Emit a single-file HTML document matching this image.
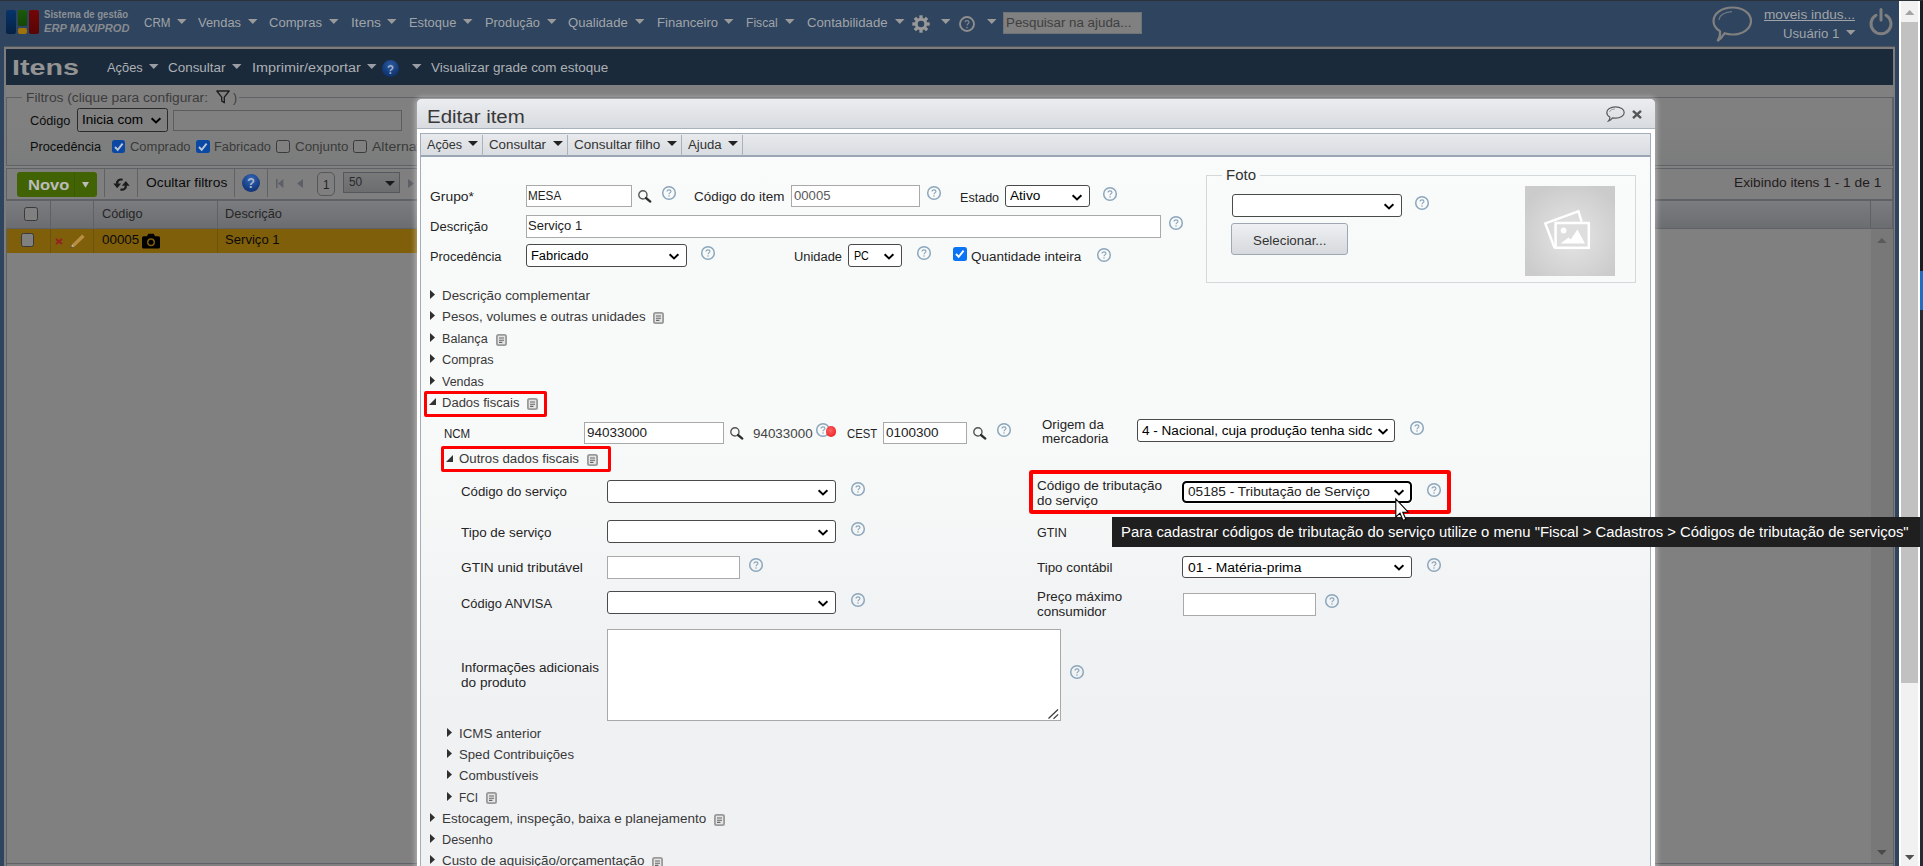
<!DOCTYPE html>
<html><head><meta charset="utf-8"><title>ERP MAXIPROD - Itens</title>
<style>
html,body{margin:0;padding:0;}
body{width:1923px;height:866px;overflow:hidden;position:relative;background:#808080;font-family:"Liberation Sans", sans-serif;}
div,span,svg{box-sizing:border-box;}
</style></head><body>
<div style="position:absolute;left:0px;top:0px;width:1923px;height:866px;box-sizing:border-box;background:#2f445e;"></div>
<div style="position:absolute;left:0px;top:0px;width:1899px;height:1px;box-sizing:border-box;background:#2b3138;"></div>
<div style="position:absolute;left:4px;top:47px;width:1891px;height:819px;box-sizing:border-box;background:#808080;border:2px solid #7d7d7d;border-bottom:none;"></div>
<div style="position:absolute;left:6px;top:49px;width:1887px;height:36px;box-sizing:border-box;background:#1a2a3b;"></div>
<div style="position:absolute;left:4px;top:46px;width:1891px;height:1px;box-sizing:border-box;background:#50555b;"></div>
<div style="position:absolute;left:6px;top:10px;width:10px;height:24.3px;box-sizing:border-box;background:linear-gradient(#07346a,#052244);border-radius:2px;"></div>
<div style="position:absolute;left:17.7px;top:10px;width:9.8px;height:15.7px;box-sizing:border-box;background:linear-gradient(#1b5b08,#134606);border-radius:2px;"></div>
<div style="position:absolute;left:17.7px;top:27.6px;width:9.8px;height:6.7px;box-sizing:border-box;background:#9e740a;border-radius:2px;"></div>
<div style="position:absolute;left:29px;top:10px;width:9.9px;height:24.3px;box-sizing:border-box;background:linear-gradient(#740606,#580404);border-radius:2px;"></div>
<svg style="position:absolute;left:176.5px;top:18.9px;overflow:visible" width="9.5" height="5" viewBox="0 0 9.5 5"><path d="M0 0 L9.5 0 L4.75 5 Z" fill="#9a9a9a"/></svg>
<svg style="position:absolute;left:247.6px;top:18.9px;overflow:visible" width="9.5" height="5" viewBox="0 0 9.5 5"><path d="M0 0 L9.5 0 L4.75 5 Z" fill="#9a9a9a"/></svg>
<svg style="position:absolute;left:329px;top:18.9px;overflow:visible" width="9.5" height="5" viewBox="0 0 9.5 5"><path d="M0 0 L9.5 0 L4.75 5 Z" fill="#9a9a9a"/></svg>
<svg style="position:absolute;left:387.4px;top:18.9px;overflow:visible" width="9.5" height="5" viewBox="0 0 9.5 5"><path d="M0 0 L9.5 0 L4.75 5 Z" fill="#9a9a9a"/></svg>
<svg style="position:absolute;left:463.4px;top:18.9px;overflow:visible" width="9.5" height="5" viewBox="0 0 9.5 5"><path d="M0 0 L9.5 0 L4.75 5 Z" fill="#9a9a9a"/></svg>
<svg style="position:absolute;left:547px;top:18.9px;overflow:visible" width="9.5" height="5" viewBox="0 0 9.5 5"><path d="M0 0 L9.5 0 L4.75 5 Z" fill="#9a9a9a"/></svg>
<svg style="position:absolute;left:635px;top:18.9px;overflow:visible" width="9.5" height="5" viewBox="0 0 9.5 5"><path d="M0 0 L9.5 0 L4.75 5 Z" fill="#9a9a9a"/></svg>
<svg style="position:absolute;left:724.4px;top:18.9px;overflow:visible" width="9.5" height="5" viewBox="0 0 9.5 5"><path d="M0 0 L9.5 0 L4.75 5 Z" fill="#9a9a9a"/></svg>
<svg style="position:absolute;left:785px;top:18.9px;overflow:visible" width="9.5" height="5" viewBox="0 0 9.5 5"><path d="M0 0 L9.5 0 L4.75 5 Z" fill="#9a9a9a"/></svg>
<svg style="position:absolute;left:895px;top:18.9px;overflow:visible" width="9.5" height="5" viewBox="0 0 9.5 5"><path d="M0 0 L9.5 0 L4.75 5 Z" fill="#9a9a9a"/></svg>
<svg style="position:absolute;left:941px;top:18.9px;overflow:visible" width="9.5" height="5" viewBox="0 0 9.5 5"><path d="M0 0 L9.5 0 L4.75 5 Z" fill="#9a9a9a"/></svg>
<svg style="position:absolute;left:987px;top:18.9px;overflow:visible" width="9.5" height="5" viewBox="0 0 9.5 5"><path d="M0 0 L9.5 0 L4.75 5 Z" fill="#9a9a9a"/></svg>
<svg style="position:absolute;left:912px;top:15px;overflow:visible" width="18" height="18" viewBox="0 0 18 18"><g transform="translate(9 9)" fill="none" stroke="#999"><circle r="4.75" stroke-width="2.9"/><path d="M0 -5.6 L0 -8.7" stroke-width="3.3" transform="rotate(0)"/><path d="M0 -5.6 L0 -8.7" stroke-width="3.3" transform="rotate(45)"/><path d="M0 -5.6 L0 -8.7" stroke-width="3.3" transform="rotate(90)"/><path d="M0 -5.6 L0 -8.7" stroke-width="3.3" transform="rotate(135)"/><path d="M0 -5.6 L0 -8.7" stroke-width="3.3" transform="rotate(180)"/><path d="M0 -5.6 L0 -8.7" stroke-width="3.3" transform="rotate(225)"/><path d="M0 -5.6 L0 -8.7" stroke-width="3.3" transform="rotate(270)"/><path d="M0 -5.6 L0 -8.7" stroke-width="3.3" transform="rotate(315)"/></g></svg>
<svg style="position:absolute;left:959px;top:16px;overflow:visible" width="16" height="16" viewBox="0 0 16 16"><circle cx="8" cy="8" r="7" fill="none" stroke="#8e8e8e" stroke-width="1.9"/><path d="M6 6.2 C6 4.2 10 4.2 10 6.2 C10 7.6 8 7.8 8 9.6" fill="none" stroke="#848a92" stroke-width="1.2"/><circle cx="8" cy="11.6" r="0.8" fill="#848a92"/></svg>
<div style="position:absolute;left:1003px;top:12px;width:139px;height:22px;box-sizing:border-box;background:#808080;border:1px solid #6e7378;"></div>
<svg style="position:absolute;left:1712px;top:6px;overflow:visible" width="41" height="37" viewBox="0 0 41 37"><path d="M20.5 1.5 C31 1.5 39 7.5 39 15 C39 22.5 31 28.5 20.5 28.5 C17.5 28.5 15 28.2 12.5 27.3 C10.5 30.5 8.5 33 5.5 35 C7.5 32 8.5 29 8 25.3 C4 22.8 1.5 19.2 1.5 15 C1.5 7.5 10 1.5 20.5 1.5 Z" fill="none" stroke="#808080" stroke-width="2.2"/><path d="M7 14 C7.5 9 13 6 20 5.7" fill="none" stroke="#6f7780" stroke-width="1.2"/></svg>
<svg style="position:absolute;left:1846px;top:29.8px;overflow:visible" width="9.5" height="5" viewBox="0 0 9.5 5"><path d="M0 0 L9.5 0 L4.75 5 Z" fill="#9a9a9a"/></svg>
<svg style="position:absolute;left:1868.5px;top:8px;overflow:visible" width="24" height="27" viewBox="0 0 24 27"><path d="M7 7.2 A10 10 0 1 0 17 7.2" fill="none" stroke="#7f7f7f" stroke-width="3" stroke-linecap="round"/><path d="M12 1.5 L12 12" stroke="#7f7f7f" stroke-width="3" stroke-linecap="round"/></svg>
<svg style="position:absolute;left:149px;top:64px;overflow:visible" width="9.5" height="5" viewBox="0 0 9.5 5"><path d="M0 0 L9.5 0 L4.75 5 Z" fill="#9a9ea4"/></svg>
<svg style="position:absolute;left:232px;top:64px;overflow:visible" width="9.5" height="5" viewBox="0 0 9.5 5"><path d="M0 0 L9.5 0 L4.75 5 Z" fill="#9a9ea4"/></svg>
<svg style="position:absolute;left:367.4px;top:64px;overflow:visible" width="9.5" height="5" viewBox="0 0 9.5 5"><path d="M0 0 L9.5 0 L4.75 5 Z" fill="#9a9ea4"/></svg>
<div style="position:absolute;left:382.4px;top:60px;width:16.6px;height:16.6px;box-sizing:border-box;border-radius:50%;background:radial-gradient(circle at 50% 30%,#2c5aa0,#123a78 60%,#0c2a5c);"></div>
<svg style="position:absolute;left:411.5px;top:64px;overflow:visible" width="9.5" height="5" viewBox="0 0 9.5 5"><path d="M0 0 L9.5 0 L4.75 5 Z" fill="#9a9ea4"/></svg>
<div style="position:absolute;left:6px;top:97px;width:1887px;height:68.5px;box-sizing:border-box;border:1px solid #5e6166;background:linear-gradient(#808080 30%,#7b7d7c);"></div>
<div style="position:absolute;left:22px;top:90px;width:217px;height:14px;box-sizing:border-box;background:#808080;"></div>
<svg style="position:absolute;left:216.3px;top:90px;overflow:visible" width="14" height="14" viewBox="0 0 14 14"><path d="M0.8 1 L13.2 1 L8.3 7.2 L8.3 12.8 L5.7 11 L5.7 7.2 Z" fill="none" stroke="#1c1c1c" stroke-width="1.3" stroke-linejoin="round"/></svg>
<div style="position:absolute;left:77px;top:108px;width:91px;height:24px;box-sizing:border-box;background:#808080;border:1px solid #2a2a2a;border-radius:2.5px;"></div>
<svg style="position:absolute;left:150.5px;top:118.0px;overflow:visible" width="10" height="5.2" viewBox="0 0 10 5.2"><path d="M0.6 0.3 L5.0 4.4 L9.4 0.3" fill="none" stroke="#000" stroke-width="2" stroke-linejoin="miter"/></svg>
<div style="position:absolute;left:173.2px;top:109.5px;width:228.6px;height:21px;box-sizing:border-box;background:#808080;border:1px solid #5d5d5d;"></div>
<div style="position:absolute;left:111.8px;top:139.7px;width:13.6px;height:13.6px;box-sizing:border-box;background:#0b48a4;border-radius:2.5px;"></div>
<svg style="position:absolute;left:111.8px;top:139.7px;overflow:visible" width="13.6" height="13.6" viewBox="0 0 13.6 13.6"><path d="M3 7 L5.7 9.8 L10.6 3.6" fill="none" stroke="#bcc6d6" stroke-width="1.9"/></svg>
<div style="position:absolute;left:196px;top:139.7px;width:13.6px;height:13.6px;box-sizing:border-box;background:#0b48a4;border-radius:2.5px;"></div>
<svg style="position:absolute;left:196px;top:139.7px;overflow:visible" width="13.6" height="13.6" viewBox="0 0 13.6 13.6"><path d="M3 7 L5.7 9.8 L10.6 3.6" fill="none" stroke="#bcc6d6" stroke-width="1.9"/></svg>
<div style="position:absolute;left:276.2px;top:139.7px;width:13.6px;height:13.6px;box-sizing:border-box;background:#808080;border:1px solid #3a3a3a;border-radius:2.5px;"></div>
<div style="position:absolute;left:353px;top:139.7px;width:13.6px;height:13.6px;box-sizing:border-box;background:#808080;border:1px solid #3a3a3a;border-radius:2.5px;"></div>
<div style="position:absolute;left:6px;top:168px;width:1887px;height:32px;box-sizing:border-box;border:1px solid #5e6166;background:#7f7f7f;"></div>
<div style="position:absolute;left:17px;top:172px;width:79.8px;height:25px;box-sizing:border-box;background:#426303;border-radius:3px;"></div>
<div style="position:absolute;left:74.3px;top:172.5px;width:1px;height:24px;box-sizing:border-box;background:#3b5903;"></div>
<svg style="position:absolute;left:82px;top:182px;overflow:visible" width="7" height="5.8" viewBox="0 0 7 5.8"><path d="M0 0 L7 0 L3.5 5.8 Z" fill="#bcbcbc"/></svg>
<div style="position:absolute;left:104px;top:169px;width:1px;height:28px;box-sizing:border-box;background:#5e6166;"></div>
<div style="position:absolute;left:137px;top:169px;width:1px;height:28px;box-sizing:border-box;background:#5e6166;"></div>
<div style="position:absolute;left:234px;top:169px;width:1px;height:28px;box-sizing:border-box;background:#5e6166;"></div>
<div style="position:absolute;left:267px;top:169px;width:1px;height:28px;box-sizing:border-box;background:#5e6166;"></div>
<svg style="position:absolute;left:112.5px;top:177.5px;overflow:visible" width="17" height="13" viewBox="0 0 17 13"><path d="M9.6 1.7 C6 0.9 3.6 3 4.3 6" fill="none" stroke="#1c1c1c" stroke-width="2.2"/><path d="M0.3 5.4 L8.1 5.4 L4.2 10.2 Z" fill="#1c1c1c"/><path d="M7.4 11.5 C11 12.3 13.4 10.2 12.7 7.2" fill="none" stroke="#1c1c1c" stroke-width="2.2"/><path d="M16.7 7.8 L8.9 7.8 L12.8 3 Z" fill="#1c1c1c"/></svg>
<div style="position:absolute;left:241.8px;top:173.8px;width:18.4px;height:18.4px;box-sizing:border-box;border-radius:50%;background:radial-gradient(circle at 50% 28%,#3566b4,#173f86 60%,#0e2b63);"></div>
<svg style="position:absolute;left:275.6px;top:179px;overflow:visible" width="8" height="9" viewBox="0 0 8 9"><path d="M0 0h1.6v9H0z M7.4 0 L7.4 9 L2 4.5 Z" fill="#5c6066"/></svg>
<svg style="position:absolute;left:296.5px;top:179px;overflow:visible" width="6" height="9" viewBox="0 0 6 9"><path d="M6 0 L6 9 L0 4.5 Z" fill="#5c6066"/></svg>
<div style="position:absolute;left:317px;top:172px;width:18px;height:24px;box-sizing:border-box;border:1px solid #54575c;border-radius:5px;"></div>
<div style="position:absolute;left:343px;top:172px;width:57px;height:21px;box-sizing:border-box;background:linear-gradient(#78797b,#6c6d6f);border:1px solid #54575c;"></div>
<svg style="position:absolute;left:384.8px;top:181px;overflow:visible" width="10" height="5" viewBox="0 0 10 5"><path d="M0 0 L10 0 L5.0 5 Z" fill="#1a1a1a"/></svg>
<svg style="position:absolute;left:407.5px;top:179px;overflow:visible" width="6" height="9" viewBox="0 0 6 9"><path d="M0 0 L0 9 L6 4.5 Z" fill="#5c6066"/></svg>
<div style="position:absolute;left:6px;top:199.5px;width:1887px;height:29.3px;box-sizing:border-box;background:linear-gradient(#7b7c7f,#6c6d70);border:1px solid #5e6166;border-left:none;"></div>
<div style="position:absolute;left:50.2px;top:200px;width:1px;height:28.3px;box-sizing:border-box;background:#5e6166;"></div>
<div style="position:absolute;left:93.2px;top:200px;width:1px;height:28.3px;box-sizing:border-box;background:#5e6166;"></div>
<div style="position:absolute;left:217.3px;top:200px;width:1px;height:28.3px;box-sizing:border-box;background:#5e6166;"></div>
<div style="position:absolute;left:1870.3px;top:200px;width:1px;height:28.3px;box-sizing:border-box;background:#5e6166;"></div>
<div style="position:absolute;left:24px;top:207.2px;width:13.6px;height:13.6px;box-sizing:border-box;background:#808080;border:1px solid #3a3a3a;border-radius:2.5px;"></div>
<div style="position:absolute;left:6.6px;top:228.8px;width:900px;height:24px;box-sizing:border-box;background:#805f0b;"></div>
<div style="position:absolute;left:50.2px;top:228.8px;width:1px;height:24px;box-sizing:border-box;background:#6b5314;"></div>
<div style="position:absolute;left:93.2px;top:228.8px;width:1px;height:24px;box-sizing:border-box;background:#6b5314;"></div>
<div style="position:absolute;left:217.3px;top:228.8px;width:1px;height:24px;box-sizing:border-box;background:#6b5314;"></div>
<div style="position:absolute;left:20.7px;top:233.2px;width:13.6px;height:13.6px;box-sizing:border-box;background:#808080;border:1px solid #3a3a3a;border-radius:2.5px;"></div>
<svg style="position:absolute;left:54.6px;top:238px;overflow:visible" width="8" height="7" viewBox="0 0 8 7"><path d="M1 1 L7 6 M7 1 L1 6" stroke="#952222" stroke-width="1.9"/></svg>
<svg style="position:absolute;left:70px;top:233.5px;overflow:visible" width="15" height="14" viewBox="0 0 15 14"><path d="M12.2 0.6 L14.6 3 L4.6 12.6 L2.2 10.2 Z" fill="#b98f45"/><path d="M2.2 10.2 L4.6 12.6 L0.8 13.6 Z" fill="#b9b2a4"/><path d="M0.4 13.8 L1.8 12.2 L2.4 13.2 Z" fill="#333"/></svg>
<svg style="position:absolute;left:142px;top:233px;overflow:visible" width="18" height="15.5" viewBox="0 0 18 15.5"><path d="M1.5 3.2 H5 L6.3 0.8 H11.7 L13 3.2 H16.5 Q18 3.2 18 4.7 V14 Q18 15.5 16.5 15.5 H1.5 Q0 15.5 0 14 V4.7 Q0 3.2 1.5 3.2 Z" fill="#000"/><circle cx="9" cy="9.2" r="4" fill="#805f0b"/><circle cx="9" cy="9.2" r="2.5" fill="#000"/></svg>
<div style="position:absolute;left:1870.8px;top:228.8px;width:22px;height:635px;box-sizing:border-box;background:#787878;"></div>
<svg style="position:absolute;left:1876.8px;top:849.5px;overflow:visible" width="9.7" height="5.1" viewBox="0 0 9.7 5.1"><path d="M0 0 L9.7 0 L4.85 5.1 Z" fill="#4a4a4a"/></svg>
<svg style="position:absolute;left:1876.8px;top:237.9px;overflow:visible" width="9.7" height="5.1" viewBox="0 0 9.7 5.1"><path d="M0 5.1 L9.7 5.1 L4.85 0 Z" fill="#5a5a5a"/></svg>
<div style="position:absolute;left:7px;top:863px;width:1886px;height:1px;box-sizing:border-box;background:#5e6166;"></div>
<div style="position:absolute;left:6px;top:228px;width:1px;height:638px;box-sizing:border-box;background:#5e6166;"></div>
<div style="position:absolute;left:1892.5px;top:97px;width:1px;height:769px;box-sizing:border-box;background:#5e6166;"></div>
<span style="position:absolute;left:44.4px;top:6px;line-height:17px;white-space:pre;font-size:10.2px;color:#8b9096;font-weight:bold;font-style:normal;letter-spacing:0.000px;transform:scaleX(0.9400);transform-origin:0 0;">Sistema de gestão</span>
<span style="position:absolute;left:43.9px;top:19px;line-height:18px;white-space:pre;font-size:11.6px;color:#868b91;font-weight:bold;font-style:italic;letter-spacing:0.000px;transform:scaleX(0.9593);transform-origin:0 0;">ERP MAXIPROD</span>
<span style="position:absolute;left:143.5px;top:13px;line-height:20px;white-space:pre;font-size:12.5px;color:#a0a4aa;font-weight:normal;font-style:normal;letter-spacing:0.000px;transform:scaleX(0.9308);transform-origin:0 0;">CRM</span>
<span style="position:absolute;left:198.0px;top:13px;line-height:20px;white-space:pre;font-size:12.5px;color:#a0a4aa;font-weight:normal;font-style:normal;letter-spacing:0.000px;transform:scaleX(1.0307);transform-origin:0 0;">Vendas</span>
<span style="position:absolute;left:269.0px;top:13px;line-height:20px;white-space:pre;font-size:12.5px;color:#a0a4aa;font-weight:normal;font-style:normal;letter-spacing:0.000px;transform:scaleX(1.0450);transform-origin:0 0;">Compras</span>
<span style="position:absolute;left:351.0px;top:13px;line-height:20px;white-space:pre;font-size:12.5px;color:#a0a4aa;font-weight:normal;font-style:normal;letter-spacing:-0.000px;transform:scaleX(1.1066);transform-origin:0 0;">Itens</span>
<span style="position:absolute;left:409.3px;top:13px;line-height:20px;white-space:pre;font-size:12.5px;color:#a0a4aa;font-weight:normal;font-style:normal;letter-spacing:-0.000px;transform:scaleX(1.0311);transform-origin:0 0;">Estoque</span>
<span style="position:absolute;left:485.0px;top:13px;line-height:20px;white-space:pre;font-size:12.5px;color:#a0a4aa;font-weight:normal;font-style:normal;letter-spacing:0.000px;transform:scaleX(1.0277);transform-origin:0 0;">Produção</span>
<span style="position:absolute;left:568.3px;top:13px;line-height:20px;white-space:pre;font-size:12.5px;color:#a0a4aa;font-weight:normal;font-style:normal;letter-spacing:0.000px;transform:scaleX(1.0474);transform-origin:0 0;">Qualidade</span>
<span style="position:absolute;left:656.8px;top:13px;line-height:20px;white-space:pre;font-size:12.5px;color:#a0a4aa;font-weight:normal;font-style:normal;letter-spacing:0.000px;transform:scaleX(1.0467);transform-origin:0 0;">Financeiro</span>
<span style="position:absolute;left:746.3px;top:13px;line-height:20px;white-space:pre;font-size:12.5px;color:#a0a4aa;font-weight:normal;font-style:normal;letter-spacing:0.000px;transform:scaleX(0.9707);transform-origin:0 0;">Fiscal</span>
<span style="position:absolute;left:807.4px;top:13px;line-height:20px;white-space:pre;font-size:12.5px;color:#a0a4aa;font-weight:normal;font-style:normal;letter-spacing:0.000px;transform:scaleX(1.0542);transform-origin:0 0;">Contabilidade</span>
<span style="position:absolute;left:1005.6px;top:13px;line-height:20px;white-space:pre;font-size:12.5px;color:#3f3f3f;font-weight:normal;font-style:normal;letter-spacing:0.000px;transform:scaleX(1.0677);transform-origin:0 0;">Pesquisar na ajuda...</span>
<span style="position:absolute;left:1764.0px;top:5px;line-height:20px;white-space:pre;font-size:12.5px;color:#a0a4aa;font-weight:normal;font-style:normal;letter-spacing:0.000px;transform:scaleX(1.0915);transform-origin:0 0;text-decoration:underline;">moveis indus...</span>
<span style="position:absolute;left:1782.7px;top:24px;line-height:20px;white-space:pre;font-size:12.5px;color:#a0a4aa;font-weight:normal;font-style:normal;letter-spacing:0.000px;transform:scaleX(1.0523);transform-origin:0 0;">Usuário 1</span>
<span style="position:absolute;left:12.0px;top:52px;line-height:31px;white-space:pre;font-size:22.6px;color:#939393;font-weight:bold;font-style:normal;letter-spacing:0.000px;transform:scaleX(1.2705);transform-origin:0 0;">Itens</span>
<span style="position:absolute;left:106.6px;top:58px;line-height:20px;white-space:pre;font-size:12.5px;color:#adb0b4;font-weight:normal;font-style:normal;letter-spacing:0.000px;transform:scaleX(1.0273);transform-origin:0 0;">Ações</span>
<span style="position:absolute;left:168.0px;top:58px;line-height:20px;white-space:pre;font-size:12.5px;color:#adb0b4;font-weight:normal;font-style:normal;letter-spacing:0.000px;transform:scaleX(1.0748);transform-origin:0 0;">Consultar</span>
<span style="position:absolute;left:251.6px;top:58px;line-height:20px;white-space:pre;font-size:12.5px;color:#adb0b4;font-weight:normal;font-style:normal;letter-spacing:0.009px;transform:scaleX(1.1500);transform-origin:0 0;">Imprimir/exportar</span>
<span style="position:absolute;left:387.2px;top:59px;line-height:21px;white-space:pre;font-size:13px;color:#9fb0c8;font-weight:bold;font-style:normal;letter-spacing:0.000px;transform:scaleX(0.8802);transform-origin:0 0;">?</span>
<span style="position:absolute;left:430.6px;top:58px;line-height:20px;white-space:pre;font-size:12.5px;color:#adb0b4;font-weight:normal;font-style:normal;letter-spacing:0.000px;transform:scaleX(1.0781);transform-origin:0 0;">Visualizar grade com estoque</span>
<span style="position:absolute;left:26.2px;top:88px;line-height:20px;white-space:pre;font-size:12.5px;color:#3c3c3c;font-weight:normal;font-style:normal;letter-spacing:0.000px;transform:scaleX(1.1005);transform-origin:0 0;">Filtros (clique para configurar: </span>
<span style="position:absolute;left:232.5px;top:88px;line-height:20px;white-space:pre;font-size:12.5px;color:#3c3c3c;font-weight:normal;font-style:normal;letter-spacing:0.000px;transform:scaleX(0.9828);transform-origin:0 0;">)</span>
<span style="position:absolute;left:30.0px;top:111px;line-height:20px;white-space:pre;font-size:12.5px;color:#0c0c0c;font-weight:normal;font-style:normal;letter-spacing:0.000px;transform:scaleX(1.0170);transform-origin:0 0;">Código</span>
<span style="position:absolute;left:82.0px;top:110px;line-height:20px;white-space:pre;font-size:12.5px;color:#000;font-weight:normal;font-style:normal;letter-spacing:0.000px;transform:scaleX(1.0838);transform-origin:0 0;">Inicia com</span>
<span style="position:absolute;left:30.0px;top:137px;line-height:20px;white-space:pre;font-size:12.5px;color:#0c0c0c;font-weight:normal;font-style:normal;letter-spacing:0.000px;transform:scaleX(1.0216);transform-origin:0 0;">Procedência</span>
<span style="position:absolute;left:130.4px;top:137px;line-height:20px;white-space:pre;font-size:12.5px;color:#3a3a3a;font-weight:normal;font-style:normal;letter-spacing:0.000px;transform:scaleX(1.0381);transform-origin:0 0;">Comprado</span>
<span style="position:absolute;left:214.4px;top:137px;line-height:20px;white-space:pre;font-size:12.5px;color:#3a3a3a;font-weight:normal;font-style:normal;letter-spacing:-0.000px;transform:scaleX(1.0253);transform-origin:0 0;">Fabricado</span>
<span style="position:absolute;left:294.8px;top:137px;line-height:20px;white-space:pre;font-size:12.5px;color:#3a3a3a;font-weight:normal;font-style:normal;letter-spacing:0.000px;transform:scaleX(1.0690);transform-origin:0 0;">Conjunto</span>
<span style="position:absolute;left:371.6px;top:137px;line-height:20px;white-space:pre;font-size:12.5px;color:#3a3a3a;font-weight:normal;font-style:normal;letter-spacing:0.000px;transform:scaleX(1.1242);transform-origin:0 0;">Alternativo</span>
<span style="position:absolute;left:28.0px;top:173px;line-height:23px;white-space:pre;font-size:15.4px;color:#bcbcbc;font-weight:bold;font-style:normal;letter-spacing:0.000px;transform:scaleX(1.0732);transform-origin:0 0;">Novo</span>
<span style="position:absolute;left:145.7px;top:173px;line-height:20px;white-space:pre;font-size:12.5px;color:#0a0a0a;font-weight:normal;font-style:normal;letter-spacing:0.000px;transform:scaleX(1.1040);transform-origin:0 0;">Ocultar filtros</span>
<span style="position:absolute;left:247.0px;top:172px;line-height:22px;white-space:pre;font-size:14.5px;color:#a6b5cc;font-weight:bold;font-style:normal;letter-spacing:0.000px;transform:scaleX(0.9030);transform-origin:0 0;">?</span>
<span style="position:absolute;left:322.5px;top:175px;line-height:20px;white-space:pre;font-size:12.5px;color:#222;font-weight:normal;font-style:normal;letter-spacing:0.000px;transform:scaleX(0.9348);transform-origin:0 0;">1</span>
<span style="position:absolute;left:348.8px;top:172px;line-height:20px;white-space:pre;font-size:12.5px;color:#2a2a2a;font-weight:normal;font-style:normal;letter-spacing:0.000px;transform:scaleX(0.9492);transform-origin:0 0;">50</span>
<span style="position:absolute;left:1734.0px;top:173px;line-height:20px;white-space:pre;font-size:12.5px;color:#241c1c;font-weight:normal;font-style:normal;letter-spacing:0.000px;transform:scaleX(1.0982);transform-origin:0 0;">Exibindo itens 1 - 1 de 1</span>
<span style="position:absolute;left:101.5px;top:204px;line-height:20px;white-space:pre;font-size:12.5px;color:#262626;font-weight:normal;font-style:normal;letter-spacing:0.000px;transform:scaleX(1.0221);transform-origin:0 0;">Código</span>
<span style="position:absolute;left:225.4px;top:204px;line-height:20px;white-space:pre;font-size:12.5px;color:#262626;font-weight:normal;font-style:normal;letter-spacing:-0.000px;transform:scaleX(1.0256);transform-origin:0 0;">Descrição</span>
<span style="position:absolute;left:101.5px;top:230px;line-height:20px;white-space:pre;font-size:12.5px;color:#0a0a0a;font-weight:normal;font-style:normal;letter-spacing:0.000px;transform:scaleX(1.0700);transform-origin:0 0;">00005</span>
<span style="position:absolute;left:225.4px;top:230px;line-height:20px;white-space:pre;font-size:12.5px;color:#0a0a0a;font-weight:normal;font-style:normal;letter-spacing:0.000px;transform:scaleX(1.0478);transform-origin:0 0;">Serviço 1</span>
<div style="position:absolute;left:417px;top:99px;width:1238px;height:787px;box-sizing:border-box;background:#fff;border-radius:5px 5px 0 0;box-shadow:0 0 5px 2px rgba(255,255,255,.36);"></div>
<div style="position:absolute;left:417px;top:99px;width:1238px;height:30px;box-sizing:border-box;background:linear-gradient(#ebedf0,#d8dbdf);border-radius:5px 5px 0 0;border-bottom:1px solid #a9b3be;"></div>
<div style="position:absolute;left:420px;top:133px;width:1231px;height:740px;box-sizing:border-box;background:linear-gradient(#fafbfb 0px,#f8faf9 120px,#f8f9f9 300px,#f6f7f7 370px,#f2f3f4 470px,#f0f1f3 570px);border:1px solid #a3aeba;border-bottom:none;"></div>
<div style="position:absolute;left:420px;top:133px;width:1231px;height:24px;box-sizing:border-box;background:linear-gradient(#e8eaed,#d9dce0);border:1px solid #a3aeba;border-bottom:2px solid #9aa6b3;"></div>
<svg style="position:absolute;left:1606px;top:106px;overflow:visible" width="19" height="15.5" viewBox="0 0 19 15.5"><path d="M9.5 0.8 C14.5 0.8 18.2 3.4 18.2 6.5 C18.2 9.6 14.5 12.2 9.5 12.2 C8.4 12.2 7.4 12.1 6.5 11.9 C5.6 13.2 4.3 14.3 2.6 14.9 C3.6 13.7 4 12.5 3.8 11.1 C2 10 0.8 8.4 0.8 6.5 C0.8 3.4 4.5 0.8 9.5 0.8 Z" fill="none" stroke="#5a5a5a" stroke-width="1.2"/><path d="M3.6 6 C4 4 6.5 3 9 3" fill="none" stroke="#8a8a8a" stroke-width="0.8"/></svg>
<svg style="position:absolute;left:1632px;top:110px;overflow:visible" width="10" height="9" viewBox="0 0 10 9"><path d="M1 0.8 L9 8.2 M9 0.8 L1 8.2" stroke="#555" stroke-width="2.4"/></svg>
<div style="position:absolute;left:482px;top:134.5px;width:1px;height:21px;box-sizing:border-box;background:#aab3bd;"></div>
<div style="position:absolute;left:567px;top:134.5px;width:1px;height:21px;box-sizing:border-box;background:#aab3bd;"></div>
<div style="position:absolute;left:681px;top:134.5px;width:1px;height:21px;box-sizing:border-box;background:#aab3bd;"></div>
<div style="position:absolute;left:742px;top:134.5px;width:1px;height:21px;box-sizing:border-box;background:#aab3bd;"></div>
<svg style="position:absolute;left:468px;top:140.5px;overflow:visible" width="10" height="5" viewBox="0 0 10 5"><path d="M0 0 L10 0 L5.0 5 Z" fill="#222"/></svg>
<svg style="position:absolute;left:553px;top:140.5px;overflow:visible" width="10" height="5" viewBox="0 0 10 5"><path d="M0 0 L10 0 L5.0 5 Z" fill="#222"/></svg>
<svg style="position:absolute;left:667px;top:140.5px;overflow:visible" width="10" height="5" viewBox="0 0 10 5"><path d="M0 0 L10 0 L5.0 5 Z" fill="#222"/></svg>
<svg style="position:absolute;left:728px;top:140.5px;overflow:visible" width="10" height="5" viewBox="0 0 10 5"><path d="M0 0 L10 0 L5.0 5 Z" fill="#222"/></svg>
<div style="position:absolute;left:526px;top:185px;width:106px;height:22px;box-sizing:border-box;background:#fff;border:1px solid #a9a9a9;"></div>
<svg style="position:absolute;left:638px;top:190px;overflow:visible" width="14" height="14" viewBox="0 0 14 14"><circle cx="4.9" cy="4.9" r="4.1" fill="none" stroke="#555" stroke-width="1.4"/><path d="M8 8 L12.3 11.6" stroke="#2e2e2e" stroke-width="2.3" stroke-linecap="round"/></svg>
<svg style="position:absolute;left:661px;top:185.3px;overflow:visible" width="16" height="16" viewBox="0 0 16 16"><circle cx="8" cy="8" r="6.3" fill="none" stroke="#8ba6bb" stroke-width="1.5"/><path d="M6 6.4 C6 4.4 10 4.4 10 6.4 C10 7.6 8 7.7 8 9.3" fill="none" stroke="#86a3b9" stroke-width="1.1"/><circle cx="8" cy="11.1" r="0.75" fill="#86a3b9"/></svg>
<div style="position:absolute;left:791px;top:185px;width:129px;height:22px;box-sizing:border-box;background:#fff;border:1px solid #a9a9a9;"></div>
<svg style="position:absolute;left:926px;top:185.3px;overflow:visible" width="16" height="16" viewBox="0 0 16 16"><circle cx="8" cy="8" r="6.3" fill="none" stroke="#8ba6bb" stroke-width="1.5"/><path d="M6 6.4 C6 4.4 10 4.4 10 6.4 C10 7.6 8 7.7 8 9.3" fill="none" stroke="#86a3b9" stroke-width="1.1"/><circle cx="8" cy="11.1" r="0.75" fill="#86a3b9"/></svg>
<div style="position:absolute;left:1005px;top:185px;width:85px;height:22px;box-sizing:border-box;background:#fff;border:1px solid #4a4a4a;border-radius:3px;"></div>
<svg style="position:absolute;left:1071.5px;top:194.5px;overflow:visible" width="10" height="5.2" viewBox="0 0 10 5.2"><path d="M0.6 0.3 L5.0 4.4 L9.4 0.3" fill="none" stroke="#000" stroke-width="2" stroke-linejoin="miter"/></svg>
<svg style="position:absolute;left:1102px;top:186px;overflow:visible" width="16" height="16" viewBox="0 0 16 16"><circle cx="8" cy="8" r="6.3" fill="none" stroke="#8ba6bb" stroke-width="1.5"/><path d="M6 6.4 C6 4.4 10 4.4 10 6.4 C10 7.6 8 7.7 8 9.3" fill="none" stroke="#86a3b9" stroke-width="1.1"/><circle cx="8" cy="11.1" r="0.75" fill="#86a3b9"/></svg>
<div style="position:absolute;left:526px;top:215px;width:635px;height:23px;box-sizing:border-box;background:#fff;border:1px solid #a9a9a9;"></div>
<svg style="position:absolute;left:1168px;top:215px;overflow:visible" width="16" height="16" viewBox="0 0 16 16"><circle cx="8" cy="8" r="6.3" fill="none" stroke="#8ba6bb" stroke-width="1.5"/><path d="M6 6.4 C6 4.4 10 4.4 10 6.4 C10 7.6 8 7.7 8 9.3" fill="none" stroke="#86a3b9" stroke-width="1.1"/><circle cx="8" cy="11.1" r="0.75" fill="#86a3b9"/></svg>
<div style="position:absolute;left:526px;top:244px;width:161px;height:23px;box-sizing:border-box;background:#fff;border:1px solid #4a4a4a;border-radius:3px;"></div>
<svg style="position:absolute;left:669.3px;top:253.85px;overflow:visible" width="10" height="5.2" viewBox="0 0 10 5.2"><path d="M0.6 0.3 L5.0 4.4 L9.4 0.3" fill="none" stroke="#000" stroke-width="2" stroke-linejoin="miter"/></svg>
<svg style="position:absolute;left:700px;top:245.3px;overflow:visible" width="16" height="16" viewBox="0 0 16 16"><circle cx="8" cy="8" r="6.3" fill="none" stroke="#8ba6bb" stroke-width="1.5"/><path d="M6 6.4 C6 4.4 10 4.4 10 6.4 C10 7.6 8 7.7 8 9.3" fill="none" stroke="#86a3b9" stroke-width="1.1"/><circle cx="8" cy="11.1" r="0.75" fill="#86a3b9"/></svg>
<div style="position:absolute;left:848px;top:244px;width:54px;height:23px;box-sizing:border-box;background:#fff;border:1px solid #4a4a4a;border-radius:3px;"></div>
<svg style="position:absolute;left:884.3px;top:253.79999999999998px;overflow:visible" width="10" height="5.2" viewBox="0 0 10 5.2"><path d="M0.6 0.3 L5.0 4.4 L9.4 0.3" fill="none" stroke="#000" stroke-width="2" stroke-linejoin="miter"/></svg>
<svg style="position:absolute;left:915.7px;top:245.4px;overflow:visible" width="16" height="16" viewBox="0 0 16 16"><circle cx="8" cy="8" r="6.3" fill="none" stroke="#8ba6bb" stroke-width="1.5"/><path d="M6 6.4 C6 4.4 10 4.4 10 6.4 C10 7.6 8 7.7 8 9.3" fill="none" stroke="#86a3b9" stroke-width="1.1"/><circle cx="8" cy="11.1" r="0.75" fill="#86a3b9"/></svg>
<div style="position:absolute;left:953px;top:247.3px;width:13.6px;height:13.6px;box-sizing:border-box;background:#0b74f4;border-radius:2.5px;"></div>
<svg style="position:absolute;left:953px;top:247.3px;overflow:visible" width="13.6" height="13.6" viewBox="0 0 13.6 13.6"><path d="M3 7 L5.7 9.8 L10.6 3.6" fill="none" stroke="#fff" stroke-width="1.9"/></svg>
<svg style="position:absolute;left:1096px;top:247px;overflow:visible" width="16" height="16" viewBox="0 0 16 16"><circle cx="8" cy="8" r="6.3" fill="none" stroke="#8ba6bb" stroke-width="1.5"/><path d="M6 6.4 C6 4.4 10 4.4 10 6.4 C10 7.6 8 7.7 8 9.3" fill="none" stroke="#86a3b9" stroke-width="1.1"/><circle cx="8" cy="11.1" r="0.75" fill="#86a3b9"/></svg>
<div style="position:absolute;left:1206px;top:174.5px;width:429.6px;height:108px;box-sizing:border-box;border:1px solid #d3d8db;"></div>
<div style="position:absolute;left:1222px;top:168px;width:38px;height:14px;box-sizing:border-box;background:#f9fafa;"></div>
<div style="position:absolute;left:1232px;top:194px;width:170px;height:23px;box-sizing:border-box;background:#fff;border:1px solid #4a4a4a;border-radius:3px;"></div>
<svg style="position:absolute;left:1383.5px;top:203.8px;overflow:visible" width="10" height="5.2" viewBox="0 0 10 5.2"><path d="M0.6 0.3 L5.0 4.4 L9.4 0.3" fill="none" stroke="#000" stroke-width="2" stroke-linejoin="miter"/></svg>
<svg style="position:absolute;left:1414px;top:195px;overflow:visible" width="16" height="16" viewBox="0 0 16 16"><circle cx="8" cy="8" r="6.3" fill="none" stroke="#8ba6bb" stroke-width="1.5"/><path d="M6 6.4 C6 4.4 10 4.4 10 6.4 C10 7.6 8 7.7 8 9.3" fill="none" stroke="#86a3b9" stroke-width="1.1"/><circle cx="8" cy="11.1" r="0.75" fill="#86a3b9"/></svg>
<div style="position:absolute;left:1231px;top:223px;width:117px;height:32px;box-sizing:border-box;background:linear-gradient(#eef0f2,#d6d9dd);border:1px solid #9fa8b2;border-radius:3px;"></div>
<div style="position:absolute;left:1525px;top:186px;width:90px;height:90px;box-sizing:border-box;background:radial-gradient(circle at 52% 55%,#e6e6e6 0,#dadada 35%,#cbcbcb 80%);"></div>
<svg style="position:absolute;left:430px;top:290.3px;overflow:visible" width="5" height="9" viewBox="0 0 5 9"><path d="M0 0 L5 4.5 L0 9 Z" fill="#2f2f2f"/></svg>
<svg style="position:absolute;left:430px;top:311.1px;overflow:visible" width="5" height="9" viewBox="0 0 5 9"><path d="M0 0 L5 4.5 L0 9 Z" fill="#2f2f2f"/></svg>
<svg style="position:absolute;left:653.3px;top:312.40000000000003px;overflow:visible" width="11" height="12" viewBox="0 0 11 12"><rect x="0.9" y="0.9" width="9.2" height="10.2" rx="1.6" fill="#e4e4e4" stroke="#9a9a9a" stroke-width="1.8"/><path d="M3 4h5M3 6.2h5M3 8.4h3.4" stroke="#666" stroke-width="1.1"/></svg>
<svg style="position:absolute;left:430px;top:333.3px;overflow:visible" width="5" height="9" viewBox="0 0 5 9"><path d="M0 0 L5 4.5 L0 9 Z" fill="#2f2f2f"/></svg>
<svg style="position:absolute;left:496px;top:333.6px;overflow:visible" width="11" height="12" viewBox="0 0 11 12"><rect x="0.9" y="0.9" width="9.2" height="10.2" rx="1.6" fill="#e4e4e4" stroke="#9a9a9a" stroke-width="1.8"/><path d="M3 4h5M3 6.2h5M3 8.4h3.4" stroke="#666" stroke-width="1.1"/></svg>
<svg style="position:absolute;left:430px;top:354.1px;overflow:visible" width="5" height="9" viewBox="0 0 5 9"><path d="M0 0 L5 4.5 L0 9 Z" fill="#2f2f2f"/></svg>
<svg style="position:absolute;left:430px;top:376.1px;overflow:visible" width="5" height="9" viewBox="0 0 5 9"><path d="M0 0 L5 4.5 L0 9 Z" fill="#2f2f2f"/></svg>
<svg style="position:absolute;left:428.8px;top:398.2px;overflow:visible" width="7" height="7" viewBox="0 0 7 7"><path d="M7 0 L7 7 L0 7 Z" fill="#333"/></svg>
<svg style="position:absolute;left:527px;top:398.2px;overflow:visible" width="11" height="12" viewBox="0 0 11 12"><rect x="0.9" y="0.9" width="9.2" height="10.2" rx="1.6" fill="#e4e4e4" stroke="#9a9a9a" stroke-width="1.8"/><path d="M3 4h5M3 6.2h5M3 8.4h3.4" stroke="#666" stroke-width="1.1"/></svg>
<div style="position:absolute;left:584px;top:422px;width:140px;height:22px;box-sizing:border-box;background:#fff;border:1px solid #a9a9a9;"></div>
<svg style="position:absolute;left:730px;top:426.6px;overflow:visible" width="14" height="14" viewBox="0 0 14 14"><circle cx="4.9" cy="4.9" r="4.1" fill="none" stroke="#555" stroke-width="1.4"/><path d="M8 8 L12.3 11.6" stroke="#2e2e2e" stroke-width="2.3" stroke-linecap="round"/></svg>
<svg style="position:absolute;left:814.6px;top:421.8px;overflow:visible" width="16" height="16" viewBox="0 0 16 16"><circle cx="8" cy="8" r="6.3" fill="none" stroke="#8ba6bb" stroke-width="1.5"/><path d="M6 6.4 C6 4.4 10 4.4 10 6.4 C10 7.6 8 7.7 8 9.3" fill="none" stroke="#86a3b9" stroke-width="1.1"/><circle cx="8" cy="11.1" r="0.75" fill="#86a3b9"/></svg>
<div style="position:absolute;left:883px;top:422px;width:84px;height:22px;box-sizing:border-box;background:#fff;border:1px solid #a9a9a9;"></div>
<svg style="position:absolute;left:973px;top:426.6px;overflow:visible" width="14" height="14" viewBox="0 0 14 14"><circle cx="4.9" cy="4.9" r="4.1" fill="none" stroke="#555" stroke-width="1.4"/><path d="M8 8 L12.3 11.6" stroke="#2e2e2e" stroke-width="2.3" stroke-linecap="round"/></svg>
<svg style="position:absolute;left:995.8px;top:422px;overflow:visible" width="16" height="16" viewBox="0 0 16 16"><circle cx="8" cy="8" r="6.3" fill="none" stroke="#8ba6bb" stroke-width="1.5"/><path d="M6 6.4 C6 4.4 10 4.4 10 6.4 C10 7.6 8 7.7 8 9.3" fill="none" stroke="#86a3b9" stroke-width="1.1"/><circle cx="8" cy="11.1" r="0.75" fill="#86a3b9"/></svg>
<div style="position:absolute;left:1137px;top:419px;width:258px;height:23px;box-sizing:border-box;background:#fff;border:1px solid #4a4a4a;border-radius:3px;"></div>
<svg style="position:absolute;left:1377.5px;top:428.8px;overflow:visible" width="10" height="5.2" viewBox="0 0 10 5.2"><path d="M0.6 0.3 L5.0 4.4 L9.4 0.3" fill="none" stroke="#000" stroke-width="2" stroke-linejoin="miter"/></svg>
<svg style="position:absolute;left:1408.8px;top:420.3px;overflow:visible" width="16" height="16" viewBox="0 0 16 16"><circle cx="8" cy="8" r="6.3" fill="none" stroke="#8ba6bb" stroke-width="1.5"/><path d="M6 6.4 C6 4.4 10 4.4 10 6.4 C10 7.6 8 7.7 8 9.3" fill="none" stroke="#86a3b9" stroke-width="1.1"/><circle cx="8" cy="11.1" r="0.75" fill="#86a3b9"/></svg>
<svg style="position:absolute;left:445.6px;top:454.6px;overflow:visible" width="7" height="7" viewBox="0 0 7 7"><path d="M7 0 L7 7 L0 7 Z" fill="#333"/></svg>
<svg style="position:absolute;left:587.3px;top:454.4px;overflow:visible" width="11" height="12" viewBox="0 0 11 12"><rect x="0.9" y="0.9" width="9.2" height="10.2" rx="1.6" fill="#e4e4e4" stroke="#9a9a9a" stroke-width="1.8"/><path d="M3 4h5M3 6.2h5M3 8.4h3.4" stroke="#666" stroke-width="1.1"/></svg>
<div style="position:absolute;left:607px;top:480px;width:229px;height:23px;box-sizing:border-box;background:#fff;border:1px solid #4a4a4a;border-radius:3px;"></div>
<svg style="position:absolute;left:818.0px;top:489.95000000000005px;overflow:visible" width="10" height="5.2" viewBox="0 0 10 5.2"><path d="M0.6 0.3 L5.0 4.4 L9.4 0.3" fill="none" stroke="#000" stroke-width="2" stroke-linejoin="miter"/></svg>
<svg style="position:absolute;left:850px;top:481px;overflow:visible" width="16" height="16" viewBox="0 0 16 16"><circle cx="8" cy="8" r="6.3" fill="none" stroke="#8ba6bb" stroke-width="1.5"/><path d="M6 6.4 C6 4.4 10 4.4 10 6.4 C10 7.6 8 7.7 8 9.3" fill="none" stroke="#86a3b9" stroke-width="1.1"/><circle cx="8" cy="11.1" r="0.75" fill="#86a3b9"/></svg>
<div style="position:absolute;left:607px;top:520px;width:229px;height:23px;box-sizing:border-box;background:#fff;border:1px solid #4a4a4a;border-radius:3px;"></div>
<svg style="position:absolute;left:818.0px;top:529.85px;overflow:visible" width="10" height="5.2" viewBox="0 0 10 5.2"><path d="M0.6 0.3 L5.0 4.4 L9.4 0.3" fill="none" stroke="#000" stroke-width="2" stroke-linejoin="miter"/></svg>
<svg style="position:absolute;left:850px;top:521px;overflow:visible" width="16" height="16" viewBox="0 0 16 16"><circle cx="8" cy="8" r="6.3" fill="none" stroke="#8ba6bb" stroke-width="1.5"/><path d="M6 6.4 C6 4.4 10 4.4 10 6.4 C10 7.6 8 7.7 8 9.3" fill="none" stroke="#86a3b9" stroke-width="1.1"/><circle cx="8" cy="11.1" r="0.75" fill="#86a3b9"/></svg>
<div style="position:absolute;left:607px;top:556px;width:133px;height:23px;box-sizing:border-box;background:#fff;border:1px solid #a9a9a9;"></div>
<svg style="position:absolute;left:748px;top:557px;overflow:visible" width="16" height="16" viewBox="0 0 16 16"><circle cx="8" cy="8" r="6.3" fill="none" stroke="#8ba6bb" stroke-width="1.5"/><path d="M6 6.4 C6 4.4 10 4.4 10 6.4 C10 7.6 8 7.7 8 9.3" fill="none" stroke="#86a3b9" stroke-width="1.1"/><circle cx="8" cy="11.1" r="0.75" fill="#86a3b9"/></svg>
<div style="position:absolute;left:607px;top:591px;width:229px;height:23px;box-sizing:border-box;background:#fff;border:1px solid #4a4a4a;border-radius:3px;"></div>
<svg style="position:absolute;left:818.0px;top:600.9px;overflow:visible" width="10" height="5.2" viewBox="0 0 10 5.2"><path d="M0.6 0.3 L5.0 4.4 L9.4 0.3" fill="none" stroke="#000" stroke-width="2" stroke-linejoin="miter"/></svg>
<svg style="position:absolute;left:850px;top:592px;overflow:visible" width="16" height="16" viewBox="0 0 16 16"><circle cx="8" cy="8" r="6.3" fill="none" stroke="#8ba6bb" stroke-width="1.5"/><path d="M6 6.4 C6 4.4 10 4.4 10 6.4 C10 7.6 8 7.7 8 9.3" fill="none" stroke="#86a3b9" stroke-width="1.1"/><circle cx="8" cy="11.1" r="0.75" fill="#86a3b9"/></svg>
<div style="position:absolute;left:607px;top:629px;width:454px;height:92px;box-sizing:border-box;background:#fff;border:1px solid #a9a9a9;"></div>
<svg style="position:absolute;left:1068.9px;top:664px;overflow:visible" width="16" height="16" viewBox="0 0 16 16"><circle cx="8" cy="8" r="6.3" fill="none" stroke="#8ba6bb" stroke-width="1.5"/><path d="M6 6.4 C6 4.4 10 4.4 10 6.4 C10 7.6 8 7.7 8 9.3" fill="none" stroke="#86a3b9" stroke-width="1.1"/><circle cx="8" cy="11.1" r="0.75" fill="#86a3b9"/></svg>
<div style="position:absolute;left:1181.8px;top:480px;width:230.8px;height:23.8px;box-sizing:border-box;background:#fff;border-radius:5px;"></div>
<div style="position:absolute;left:1182px;top:481px;width:230px;height:22px;box-sizing:border-box;background:#fff;border:2px solid #000;border-radius:4.5px;"></div>
<svg style="position:absolute;left:1394.4px;top:490.4px;overflow:visible" width="10" height="5.2" viewBox="0 0 10 5.2"><path d="M0.6 0.3 L5.0 4.4 L9.4 0.3" fill="none" stroke="#000" stroke-width="2" stroke-linejoin="miter"/></svg>
<svg style="position:absolute;left:1426px;top:482px;overflow:visible" width="16" height="16" viewBox="0 0 16 16"><circle cx="8" cy="8" r="6.3" fill="none" stroke="#8ba6bb" stroke-width="1.5"/><path d="M6 6.4 C6 4.4 10 4.4 10 6.4 C10 7.6 8 7.7 8 9.3" fill="none" stroke="#86a3b9" stroke-width="1.1"/><circle cx="8" cy="11.1" r="0.75" fill="#86a3b9"/></svg>
<div style="position:absolute;left:1182px;top:556px;width:230px;height:22px;box-sizing:border-box;background:#fff;border:1px solid #4a4a4a;border-radius:3px;"></div>
<svg style="position:absolute;left:1394.4px;top:565.4000000000001px;overflow:visible" width="10" height="5.2" viewBox="0 0 10 5.2"><path d="M0.6 0.3 L5.0 4.4 L9.4 0.3" fill="none" stroke="#000" stroke-width="2" stroke-linejoin="miter"/></svg>
<svg style="position:absolute;left:1426px;top:557px;overflow:visible" width="16" height="16" viewBox="0 0 16 16"><circle cx="8" cy="8" r="6.3" fill="none" stroke="#8ba6bb" stroke-width="1.5"/><path d="M6 6.4 C6 4.4 10 4.4 10 6.4 C10 7.6 8 7.7 8 9.3" fill="none" stroke="#86a3b9" stroke-width="1.1"/><circle cx="8" cy="11.1" r="0.75" fill="#86a3b9"/></svg>
<div style="position:absolute;left:1183px;top:593px;width:133px;height:23px;box-sizing:border-box;background:#fff;border:1px solid #a9a9a9;"></div>
<svg style="position:absolute;left:1324px;top:592.7px;overflow:visible" width="16" height="16" viewBox="0 0 16 16"><circle cx="8" cy="8" r="6.3" fill="none" stroke="#8ba6bb" stroke-width="1.5"/><path d="M6 6.4 C6 4.4 10 4.4 10 6.4 C10 7.6 8 7.7 8 9.3" fill="none" stroke="#86a3b9" stroke-width="1.1"/><circle cx="8" cy="11.1" r="0.75" fill="#86a3b9"/></svg>
<svg style="position:absolute;left:447px;top:728.0px;overflow:visible" width="5" height="9" viewBox="0 0 5 9"><path d="M0 0 L5 4.5 L0 9 Z" fill="#2f2f2f"/></svg>
<svg style="position:absolute;left:447px;top:749.1999999999999px;overflow:visible" width="5" height="9" viewBox="0 0 5 9"><path d="M0 0 L5 4.5 L0 9 Z" fill="#2f2f2f"/></svg>
<svg style="position:absolute;left:447px;top:770.0px;overflow:visible" width="5" height="9" viewBox="0 0 5 9"><path d="M0 0 L5 4.5 L0 9 Z" fill="#2f2f2f"/></svg>
<svg style="position:absolute;left:447px;top:792.3px;overflow:visible" width="5" height="9" viewBox="0 0 5 9"><path d="M0 0 L5 4.5 L0 9 Z" fill="#2f2f2f"/></svg>
<svg style="position:absolute;left:486px;top:792.1px;overflow:visible" width="11" height="12" viewBox="0 0 11 12"><rect x="0.9" y="0.9" width="9.2" height="10.2" rx="1.6" fill="#e4e4e4" stroke="#9a9a9a" stroke-width="1.8"/><path d="M3 4h5M3 6.2h5M3 8.4h3.4" stroke="#666" stroke-width="1.1"/></svg>
<svg style="position:absolute;left:430px;top:813.0999999999999px;overflow:visible" width="5" height="9" viewBox="0 0 5 9"><path d="M0 0 L5 4.5 L0 9 Z" fill="#2f2f2f"/></svg>
<svg style="position:absolute;left:714px;top:814.4px;overflow:visible" width="11" height="12" viewBox="0 0 11 12"><rect x="0.9" y="0.9" width="9.2" height="10.2" rx="1.6" fill="#e4e4e4" stroke="#9a9a9a" stroke-width="1.8"/><path d="M3 4h5M3 6.2h5M3 8.4h3.4" stroke="#666" stroke-width="1.1"/></svg>
<svg style="position:absolute;left:430px;top:834.0px;overflow:visible" width="5" height="9" viewBox="0 0 5 9"><path d="M0 0 L5 4.5 L0 9 Z" fill="#2f2f2f"/></svg>
<svg style="position:absolute;left:430px;top:855.3px;overflow:visible" width="5" height="9" viewBox="0 0 5 9"><path d="M0 0 L5 4.5 L0 9 Z" fill="#2f2f2f"/></svg>
<svg style="position:absolute;left:652.4px;top:856.6px;overflow:visible" width="11" height="12" viewBox="0 0 11 12"><rect x="0.9" y="0.9" width="9.2" height="10.2" rx="1.6" fill="#e4e4e4" stroke="#9a9a9a" stroke-width="1.8"/><path d="M3 4h5M3 6.2h5M3 8.4h3.4" stroke="#666" stroke-width="1.1"/></svg>
<span style="position:absolute;left:426.6px;top:103px;line-height:27px;white-space:pre;font-size:18.3px;color:#383838;font-weight:normal;font-style:normal;letter-spacing:0.000px;transform:scaleX(1.1193);transform-origin:0 0;">Editar item</span>
<span style="position:absolute;left:427.0px;top:135px;line-height:20px;white-space:pre;font-size:12.5px;color:#333;font-weight:normal;font-style:normal;letter-spacing:0.000px;transform:scaleX(1.0072);transform-origin:0 0;">Ações</span>
<span style="position:absolute;left:489.0px;top:135px;line-height:20px;white-space:pre;font-size:12.5px;color:#333;font-weight:normal;font-style:normal;letter-spacing:0.000px;transform:scaleX(1.0654);transform-origin:0 0;">Consultar</span>
<span style="position:absolute;left:573.7px;top:135px;line-height:20px;white-space:pre;font-size:12.5px;color:#333;font-weight:normal;font-style:normal;letter-spacing:0.000px;transform:scaleX(1.0800);transform-origin:0 0;">Consultar filho</span>
<span style="position:absolute;left:687.7px;top:135px;line-height:20px;white-space:pre;font-size:12.5px;color:#333;font-weight:normal;font-style:normal;letter-spacing:0.000px;transform:scaleX(1.0536);transform-origin:0 0;">Ajuda</span>
<span style="position:absolute;left:430.0px;top:187px;line-height:20px;white-space:pre;font-size:12.5px;color:#242424;font-weight:normal;font-style:normal;letter-spacing:0.000px;transform:scaleX(1.1108);transform-origin:0 0;">Grupo*</span>
<span style="position:absolute;left:694.0px;top:187px;line-height:20px;white-space:pre;font-size:12.5px;color:#242424;font-weight:normal;font-style:normal;letter-spacing:0.000px;transform:scaleX(1.0752);transform-origin:0 0;">Código do item</span>
<span style="position:absolute;left:959.5px;top:188px;line-height:20px;white-space:pre;font-size:12.5px;color:#242424;font-weight:normal;font-style:normal;letter-spacing:0.000px;transform:scaleX(1.0046);transform-origin:0 0;">Estado</span>
<span style="position:absolute;left:430.0px;top:217px;line-height:20px;white-space:pre;font-size:12.5px;color:#242424;font-weight:normal;font-style:normal;letter-spacing:0.000px;transform:scaleX(1.0436);transform-origin:0 0;">Descrição</span>
<span style="position:absolute;left:430.0px;top:247px;line-height:20px;white-space:pre;font-size:12.5px;color:#242424;font-weight:normal;font-style:normal;letter-spacing:0.000px;transform:scaleX(1.0288);transform-origin:0 0;">Procedência</span>
<span style="position:absolute;left:794.0px;top:247px;line-height:20px;white-space:pre;font-size:12.5px;color:#242424;font-weight:normal;font-style:normal;letter-spacing:0.000px;transform:scaleX(1.0305);transform-origin:0 0;">Unidade</span>
<span style="position:absolute;left:971.4px;top:247px;line-height:20px;white-space:pre;font-size:12.5px;color:#242424;font-weight:normal;font-style:normal;letter-spacing:0.000px;transform:scaleX(1.0787);transform-origin:0 0;">Quantidade inteira</span>
<span style="position:absolute;left:442.3px;top:286px;line-height:20px;white-space:pre;font-size:12.5px;color:#383838;font-weight:normal;font-style:normal;letter-spacing:0.000px;transform:scaleX(1.0698);transform-origin:0 0;">Descrição complementar</span>
<span style="position:absolute;left:442.3px;top:307px;line-height:20px;white-space:pre;font-size:12.5px;color:#383838;font-weight:normal;font-style:normal;letter-spacing:0.000px;transform:scaleX(1.0660);transform-origin:0 0;">Pesos, volumes e outras unidades</span>
<span style="position:absolute;left:442.3px;top:329px;line-height:20px;white-space:pre;font-size:12.5px;color:#383838;font-weight:normal;font-style:normal;letter-spacing:0.000px;transform:scaleX(1.0113);transform-origin:0 0;">Balança</span>
<span style="position:absolute;left:442.3px;top:350px;line-height:20px;white-space:pre;font-size:12.5px;color:#383838;font-weight:normal;font-style:normal;letter-spacing:0.000px;transform:scaleX(1.0193);transform-origin:0 0;">Compras</span>
<span style="position:absolute;left:442.3px;top:372px;line-height:20px;white-space:pre;font-size:12.5px;color:#383838;font-weight:normal;font-style:normal;letter-spacing:0.000px;transform:scaleX(0.9996);transform-origin:0 0;">Vendas</span>
<span style="position:absolute;left:442.3px;top:393px;line-height:20px;white-space:pre;font-size:12.5px;color:#383838;font-weight:normal;font-style:normal;letter-spacing:0.000px;transform:scaleX(1.0411);transform-origin:0 0;">Dados fiscais</span>
<span style="position:absolute;left:444.3px;top:424px;line-height:20px;white-space:pre;font-size:12.5px;color:#242424;font-weight:normal;font-style:normal;letter-spacing:0.000px;transform:scaleX(0.9203);transform-origin:0 0;">NCM</span>
<span style="position:absolute;left:753.4px;top:424px;line-height:20px;white-space:pre;font-size:12.5px;color:#444;font-weight:normal;font-style:normal;letter-spacing:0.000px;transform:scaleX(1.0715);transform-origin:0 0;">94033000</span>
<span style="position:absolute;left:846.5px;top:424px;line-height:20px;white-space:pre;font-size:12.5px;color:#242424;font-weight:normal;font-style:normal;letter-spacing:0.000px;transform:scaleX(0.9057);transform-origin:0 0;">CEST</span>
<span style="position:absolute;left:1041.6px;top:415px;line-height:20px;white-space:pre;font-size:12.5px;color:#242424;font-weight:normal;font-style:normal;letter-spacing:0.000px;transform:scaleX(1.0590);transform-origin:0 0;">Origem da</span>
<span style="position:absolute;left:1041.6px;top:429px;line-height:20px;white-space:pre;font-size:12.5px;color:#242424;font-weight:normal;font-style:normal;letter-spacing:0.000px;transform:scaleX(1.0619);transform-origin:0 0;">mercadoria</span>
<span style="position:absolute;left:459.0px;top:449px;line-height:20px;white-space:pre;font-size:12.5px;color:#383838;font-weight:normal;font-style:normal;letter-spacing:-0.000px;transform:scaleX(1.0596);transform-origin:0 0;">Outros dados fiscais</span>
<span style="position:absolute;left:461.0px;top:482px;line-height:20px;white-space:pre;font-size:12.5px;color:#242424;font-weight:normal;font-style:normal;letter-spacing:0.000px;transform:scaleX(1.0593);transform-origin:0 0;">Código do serviço</span>
<span style="position:absolute;left:461.0px;top:523px;line-height:20px;white-space:pre;font-size:12.5px;color:#242424;font-weight:normal;font-style:normal;letter-spacing:0.000px;transform:scaleX(1.0736);transform-origin:0 0;">Tipo de serviço</span>
<span style="position:absolute;left:461.0px;top:558px;line-height:20px;white-space:pre;font-size:12.5px;color:#242424;font-weight:normal;font-style:normal;letter-spacing:0.000px;transform:scaleX(1.0965);transform-origin:0 0;">GTIN unid tributável</span>
<span style="position:absolute;left:461.0px;top:594px;line-height:20px;white-space:pre;font-size:12.5px;color:#242424;font-weight:normal;font-style:normal;letter-spacing:0.000px;transform:scaleX(1.0312);transform-origin:0 0;">Código ANVISA</span>
<span style="position:absolute;left:461.0px;top:658px;line-height:20px;white-space:pre;font-size:12.5px;color:#242424;font-weight:normal;font-style:normal;letter-spacing:0.000px;transform:scaleX(1.0793);transform-origin:0 0;">Informações adicionais</span>
<span style="position:absolute;left:461.0px;top:673px;line-height:20px;white-space:pre;font-size:12.5px;color:#242424;font-weight:normal;font-style:normal;letter-spacing:0.000px;transform:scaleX(1.0873);transform-origin:0 0;">do produto</span>
<span style="position:absolute;left:1036.8px;top:476px;line-height:20px;white-space:pre;font-size:12.5px;color:#242424;font-weight:normal;font-style:normal;letter-spacing:0.000px;transform:scaleX(1.0836);transform-origin:0 0;">Código de tributação</span>
<span style="position:absolute;left:1036.8px;top:491px;line-height:20px;white-space:pre;font-size:12.5px;color:#242424;font-weight:normal;font-style:normal;letter-spacing:0.000px;transform:scaleX(1.0705);transform-origin:0 0;">do serviço</span>
<span style="position:absolute;left:1036.8px;top:523px;line-height:20px;white-space:pre;font-size:12.5px;color:#242424;font-weight:normal;font-style:normal;letter-spacing:0.000px;transform:scaleX(0.9980);transform-origin:0 0;">GTIN</span>
<span style="position:absolute;left:1036.8px;top:558px;line-height:20px;white-space:pre;font-size:12.5px;color:#242424;font-weight:normal;font-style:normal;letter-spacing:0.000px;transform:scaleX(1.0721);transform-origin:0 0;">Tipo contábil</span>
<span style="position:absolute;left:1036.7px;top:587px;line-height:20px;white-space:pre;font-size:12.5px;color:#242424;font-weight:normal;font-style:normal;letter-spacing:0.000px;transform:scaleX(1.0652);transform-origin:0 0;">Preço máximo</span>
<span style="position:absolute;left:1036.7px;top:602px;line-height:20px;white-space:pre;font-size:12.5px;color:#242424;font-weight:normal;font-style:normal;letter-spacing:0.000px;transform:scaleX(1.0723);transform-origin:0 0;">consumidor</span>
<span style="position:absolute;left:459.0px;top:724px;line-height:20px;white-space:pre;font-size:12.5px;color:#383838;font-weight:normal;font-style:normal;letter-spacing:0.000px;transform:scaleX(1.0673);transform-origin:0 0;">ICMS anterior</span>
<span style="position:absolute;left:459.0px;top:745px;line-height:20px;white-space:pre;font-size:12.5px;color:#383838;font-weight:normal;font-style:normal;letter-spacing:0.000px;transform:scaleX(1.0540);transform-origin:0 0;">Sped Contribuições</span>
<span style="position:absolute;left:459.0px;top:766px;line-height:20px;white-space:pre;font-size:12.5px;color:#383838;font-weight:normal;font-style:normal;letter-spacing:0.000px;transform:scaleX(1.0471);transform-origin:0 0;">Combustíveis</span>
<span style="position:absolute;left:459.0px;top:788px;line-height:20px;white-space:pre;font-size:12.5px;color:#383838;font-weight:normal;font-style:normal;letter-spacing:0.000px;transform:scaleX(0.9434);transform-origin:0 0;">FCI</span>
<span style="position:absolute;left:442.3px;top:809px;line-height:20px;white-space:pre;font-size:12.5px;color:#383838;font-weight:normal;font-style:normal;letter-spacing:0.000px;transform:scaleX(1.0771);transform-origin:0 0;">Estocagem, inspeção, baixa e planejamento</span>
<span style="position:absolute;left:442.3px;top:830px;line-height:20px;white-space:pre;font-size:12.5px;color:#383838;font-weight:normal;font-style:normal;letter-spacing:-0.000px;transform:scaleX(1.0131);transform-origin:0 0;">Desenho</span>
<span style="position:absolute;left:442.3px;top:851px;line-height:20px;white-space:pre;font-size:12.5px;color:#383838;font-weight:normal;font-style:normal;letter-spacing:0.000px;transform:scaleX(1.0713);transform-origin:0 0;">Custo de aquisição/orçamentação</span>
<svg style="position:absolute;left:1544px;top:210px;overflow:visible" width="47" height="40" viewBox="0 0 47 40"><path d="M37.6 11.6 L34.4 1.3 L1.3 13.4 L10.6 38" fill="none" stroke="#fff" stroke-width="2.4" stroke-linejoin="miter"/><rect x="11.6" y="13" width="33.2" height="24.8" fill="#dedede" stroke="#fff" stroke-width="2.5"/><circle cx="19.6" cy="20.5" r="2.9" fill="#fff"/><path d="M16.5 33.6 L24.6 27.6 L26.8 29.4 L33.4 19.6 L41 33.6 Z" fill="#fff"/></svg>
<div style="position:absolute;left:424px;top:391px;width:123px;height:26px;box-sizing:border-box;border:3px solid #fe0000;border-radius:2px;"></div>
<div style="position:absolute;left:825.8px;top:426.2px;width:10.4px;height:10.4px;box-sizing:border-box;border-radius:50%;background:radial-gradient(circle at 40% 40%,#ff5a5a,#f01818 70%);opacity:.92;"></div>
<div style="position:absolute;left:441px;top:446px;width:169.5px;height:26px;box-sizing:border-box;border:3px solid #fe0000;border-radius:2px;"></div>
<svg style="position:absolute;left:1047.5px;top:709px;overflow:visible" width="11" height="10" viewBox="0 0 11 10"><path d="M0.5 9.5 L10 0.5 M5.5 9.8 L10.2 5.4" stroke="#3a3a3a" stroke-width="1.2"/></svg>
<div style="position:absolute;left:1029px;top:469.5px;width:421.5px;height:44px;box-sizing:border-box;border:4px solid #fe0000;border-radius:3px;"></div>
<span style="position:absolute;left:528.3px;top:186px;line-height:20px;white-space:pre;font-size:12.5px;color:#222;font-weight:normal;font-style:normal;letter-spacing:0.000px;transform:scaleX(0.9369);transform-origin:0 0;">MESA</span>
<span style="position:absolute;left:794.0px;top:186px;line-height:20px;white-space:pre;font-size:12.5px;color:#5a5a5a;font-weight:normal;font-style:normal;letter-spacing:0.000px;transform:scaleX(1.0499);transform-origin:0 0;">00005</span>
<span style="position:absolute;left:1010.0px;top:186px;line-height:20px;white-space:pre;font-size:12.5px;color:#000;font-weight:normal;font-style:normal;letter-spacing:0.000px;transform:scaleX(1.0901);transform-origin:0 0;">Ativo</span>
<span style="position:absolute;left:528.3px;top:216px;line-height:20px;white-space:pre;font-size:12.5px;color:#222;font-weight:normal;font-style:normal;letter-spacing:0.000px;transform:scaleX(1.0401);transform-origin:0 0;">Serviço 1</span>
<span style="position:absolute;left:531.0px;top:246px;line-height:20px;white-space:pre;font-size:12.5px;color:#000;font-weight:normal;font-style:normal;letter-spacing:-0.000px;transform:scaleX(1.0307);transform-origin:0 0;">Fabricado</span>
<span style="position:absolute;left:853.5px;top:246px;line-height:20px;white-space:pre;font-size:12.5px;color:#000;font-weight:normal;font-style:normal;letter-spacing:-0.166px;transform:scaleX(0.8600);transform-origin:0 0;">PC</span>
<span style="position:absolute;left:1226.0px;top:164px;line-height:22px;white-space:pre;font-size:14.2px;color:#333;font-weight:normal;font-style:normal;letter-spacing:0.000px;transform:scaleX(1.0567);transform-origin:0 0;">Foto</span>
<span style="position:absolute;left:1252.5px;top:231px;line-height:20px;white-space:pre;font-size:12.5px;color:#333;font-weight:normal;font-style:normal;letter-spacing:0.000px;transform:scaleX(1.0684);transform-origin:0 0;">Selecionar...</span>
<span style="position:absolute;left:587.0px;top:423px;line-height:20px;white-space:pre;font-size:12.5px;color:#222;font-weight:normal;font-style:normal;letter-spacing:0.000px;transform:scaleX(1.0787);transform-origin:0 0;">94033000</span>
<span style="position:absolute;left:886.0px;top:423px;line-height:20px;white-space:pre;font-size:12.5px;color:#222;font-weight:normal;font-style:normal;letter-spacing:0.000px;transform:scaleX(1.0787);transform-origin:0 0;">0100300</span>
<span style="position:absolute;left:1141.6px;top:421px;line-height:20px;white-space:pre;font-size:12.5px;color:#000;font-weight:normal;font-style:normal;letter-spacing:-0.000px;transform:scaleX(1.0835);transform-origin:0 0;">4 - Nacional, cuja produção tenha sidc</span>
<span style="position:absolute;left:1188.0px;top:482px;line-height:20px;white-space:pre;font-size:12.5px;color:#222;font-weight:normal;font-style:normal;letter-spacing:0.000px;transform:scaleX(1.0901);transform-origin:0 0;">05185 - Tributação de Serviço</span>
<span style="position:absolute;left:1188.0px;top:558px;line-height:20px;white-space:pre;font-size:12.5px;color:#000;font-weight:normal;font-style:normal;letter-spacing:0.000px;transform:scaleX(1.1104);transform-origin:0 0;">01 - Matéria-prima</span>
<div style="position:absolute;left:1899px;top:1px;width:21.3px;height:865px;box-sizing:border-box;background:#f1f1f1;"></div>
<div style="position:absolute;left:1899px;top:1px;width:2px;height:865px;box-sizing:border-box;background:#fff;"></div>
<div style="position:absolute;left:1918px;top:1px;width:2.3px;height:865px;box-sizing:border-box;background:#fff;"></div>
<div style="position:absolute;left:1901px;top:22px;width:17px;height:661px;box-sizing:border-box;background:#c1c1c1;"></div>
<svg style="position:absolute;left:1905px;top:10.2px;overflow:visible" width="9.4" height="5" viewBox="0 0 9.4 5"><path d="M0 5 L9.4 5 L4.7 0 Z" fill="#a3a3a3"/></svg>
<svg style="position:absolute;left:1905px;top:855.3px;overflow:visible" width="9.4" height="5" viewBox="0 0 9.4 5"><path d="M0 0 L9.4 0 L4.7 5 Z" fill="#505050"/></svg>
<div style="position:absolute;left:1920.3px;top:0px;width:3px;height:866px;box-sizing:border-box;background:linear-gradient(#1b1e21 0,#1b1e21 271px,#1f6ec2 271px,#1f6ec2 310px,#262b31 310px);"></div>
<div style="position:absolute;left:0px;top:0px;width:1923px;height:1px;box-sizing:border-box;background:#2b3138;"></div>
<div style="position:absolute;left:1112px;top:517px;width:808.3px;height:30.3px;box-sizing:border-box;background:#1f1f1f;"></div>
<span style="position:absolute;left:1121.4px;top:521px;line-height:22px;white-space:pre;font-size:14px;color:#fff;font-weight:normal;font-style:normal;letter-spacing:0.000px;transform:scaleX(1.0589);transform-origin:0 0;">Para cadastrar códigos de tributação do serviço utilize o menu &quot;Fiscal &gt; Cadastros &gt; Códigos de tributação de serviços&quot;</span>
<svg style="position:absolute;left:1394.8px;top:497.8px;overflow:visible" width="14" height="24" viewBox="0 0 14 24"><path d="M0.8 0.8 L0.8 19 L5 15.2 L8 22.4 L10.8 21.2 L7.8 14.2 L13.2 14.2 Z" fill="#fff" stroke="#000" stroke-width="1.1" stroke-linejoin="miter"/></svg>
</body></html>
